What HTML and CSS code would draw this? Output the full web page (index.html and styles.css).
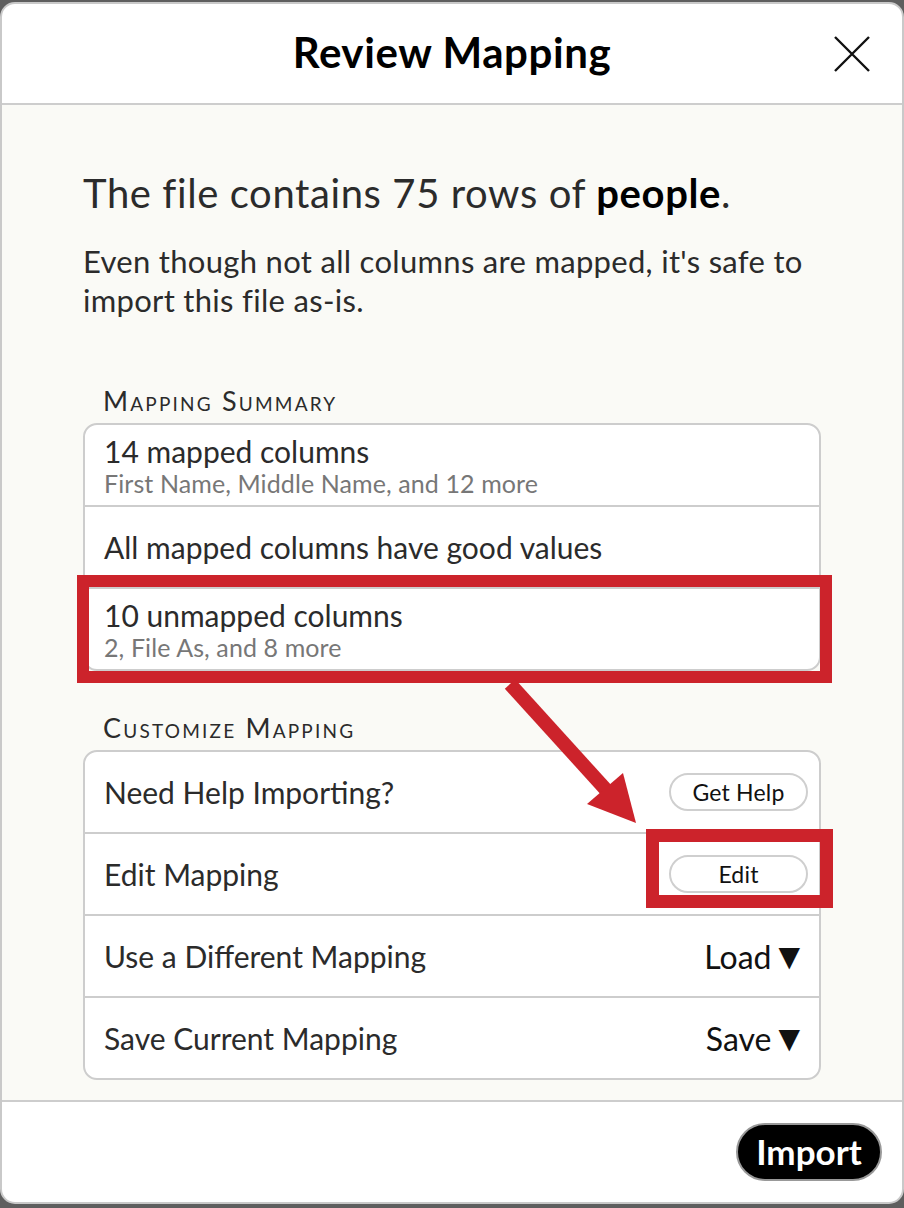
FILE: index.html
```html
<!DOCTYPE html>
<html>
<head>
<meta charset="utf-8">
<link rel="stylesheet" href="styles.css">
</head>
<body>
<div class="modal">
  <div class="header">
    <h1 class="title">Review Mapping</h1>
    <svg class="close" width="36" height="36" viewBox="0 0 36 36"><path d="M1 1 L35 35 M35 1 L1 35" stroke="#111" stroke-width="2.4" fill="none"/></svg>
  </div>
  <div class="content">
    <p class="lead">The file contains 75 rows of <b>people</b>.</p>
    <p class="desc">Even though not all columns are mapped, it's safe to import this file as-is.</p>

    <div class="section-label">Mapping Summary</div>
    <div class="list">
      <div class="row two">
        <div class="row-title">14 mapped columns</div>
        <div class="row-sub">First Name, Middle Name, and 12 more</div>
      </div>
      <div class="row">
        <div class="row-title">All mapped columns have good values</div>
      </div>
      <div class="row two highlighted">
        <div class="row-title">10 unmapped columns</div>
        <div class="row-sub">2, File As, and 8 more</div>
        <div class="mark mark-row"></div>
      </div>
    </div>

    <div class="section-label second">Customize Mapping</div>
    <div class="list">
      <div class="row action">
        <div class="row-title">Need Help Importing?</div>
        <button class="pill">Get Help</button>
      </div>
      <div class="row action">
        <div class="row-title">Edit Mapping</div>
        <div class="pill-wrap">
          <button class="pill">Edit</button>
          <div class="mark mark-btn"></div>
        </div>
      </div>
      <div class="row action">
        <div class="row-title">Use a Different Mapping</div>
        <div class="drop">Load <span class="tri">▼</span></div>
      </div>
      <div class="row action">
        <div class="row-title">Save Current Mapping</div>
        <div class="drop">Save <span class="tri">▼</span></div>
      </div>
    </div>
  </div>
  <div class="footer">
    <button class="import">Import</button>
  </div>
</div>
<svg class="arrow" width="170" height="170" viewBox="0 0 170 170">
  <line x1="20" y1="14" x2="128" y2="133" stroke="#cc232b" stroke-width="14"/>
  <polygon points="146,153 97,134 133,103" fill="#cc232b"/>
</svg>
</body>
</html>
```
FILE: styles.css
```css
html, body {
  margin: 0;
  padding: 0;
}
body {
  background: #5e5e5e;
  width: 904px;
  height: 1208px;
  overflow: hidden;
  position: relative;
  font-family: Lato, "Open Sans", sans-serif;
  color: #2b2b2b;
}
.modal {
  margin-top: 2px;
  height: 1202px;
  box-sizing: border-box;
  border: 2px solid #c9c9c9;
  border-radius: 15px;
  background: #fff;
  display: flex;
  flex-direction: column;
  overflow: hidden;
}
.header {
  height: 99px;
  flex: none;
  border-bottom: 2px solid #cdcdcd;
  display: flex;
  align-items: center;
  justify-content: center;
  position: relative;
}
.title {
  margin: 0 0 4px;
  font-size: 42px;
  font-weight: 700;
  color: #000;
  letter-spacing: 0.6px;
}
.close {
  position: absolute;
  right: 32px;
  top: 32px;
}
.content {
  flex: 1;
  background: #fafaf6;
  padding: 0 81px;
}
.lead {
  margin: 66px 0 0;
  font-size: 40px;
  line-height: 44px;
  letter-spacing: 0.6px;
  color: #2b2b2b;
}
.lead b {
  color: #000;
}
.desc {
  margin: 27px 0 0;
  font-size: 31px;
  line-height: 39px;
  letter-spacing: 0.3px;
  color: #2b2b2b;
}
.section-label {
  margin: 66px 0 0 20px;
  font-size: 27px;
  line-height: 30px;
  font-variant: small-caps;
  letter-spacing: 2.2px;
  color: #2b2b2b;
}
.section-label + .list {
  margin-top: 7px;
}
.list {
  background: #fff;
  border: 2px solid #cdcdcd;
  border-radius: 14px;
}
.section-label.second {
  margin-top: 42px;
}
.row {
  height: 80px;
  box-sizing: border-box;
  padding: 0 19px;
  display: flex;
  flex-direction: column;
  justify-content: center;
  position: relative;
}
.row + .row {
  border-top: 2px solid #cdcdcd;
  height: 82px;
}
.row.two {
  justify-content: flex-start;
  padding-top: 9px;
}
.row-title {
  font-size: 30px;
  line-height: 34px;
  color: #2b2b2b;
}
.row-sub {
  font-size: 25px;
  line-height: 31px;
  letter-spacing: 0.1px;
  color: #777;
}
.action {
  flex-direction: row;
  align-items: center;
  justify-content: space-between;
}
.pill-wrap {
  position: relative;
  display: flex;
  margin-right: -8px;
}
.action > .pill {
  margin-right: -8px;
}
.pill {
  width: 139px;
  height: 38px;
  box-sizing: border-box;
  border: 2px solid #cfcfcf;
  border-radius: 19px;
  background: #fff;
  font-family: Lato, "Open Sans", sans-serif;
  font-size: 23px;
  letter-spacing: 0.2px;
  color: #111;
  padding: 0;
}
.drop {
  font-size: 32px;
  color: #111;
  display: flex;
  align-items: center;
  gap: 7px;
}
.tri {
  font-size: 28px;
  line-height: 1;
  font-family: "DejaVu Sans", sans-serif;
  margin-top: 2px;
}
.mark {
  position: absolute;
  border: 12px solid #cc232b;
}
.mark-row {
  top: -14px;
  left: -8px;
  right: -13px;
  bottom: -14px;
}
.mark-btn {
  top: -26px;
  left: -23px;
  right: -25px;
  bottom: -15px;
  border-width: 13px;
}
.footer {
  height: 100px;
  flex: none;
  border-top: 2px solid #cdcdcd;
  display: flex;
  align-items: center;
  justify-content: flex-end;
  padding-right: 20px;
}
.import {
  width: 146px;
  height: 58px;
  border-radius: 29px;
  background: #000;
  border: 2px solid #999;
  color: #fff;
  font-family: Lato, "Open Sans", sans-serif;
  font-size: 35px;
  font-weight: 700;
  padding: 0 0 2px;
}
.arrow {
  position: absolute;
  left: 490px;
  top: 670px;
}
```
